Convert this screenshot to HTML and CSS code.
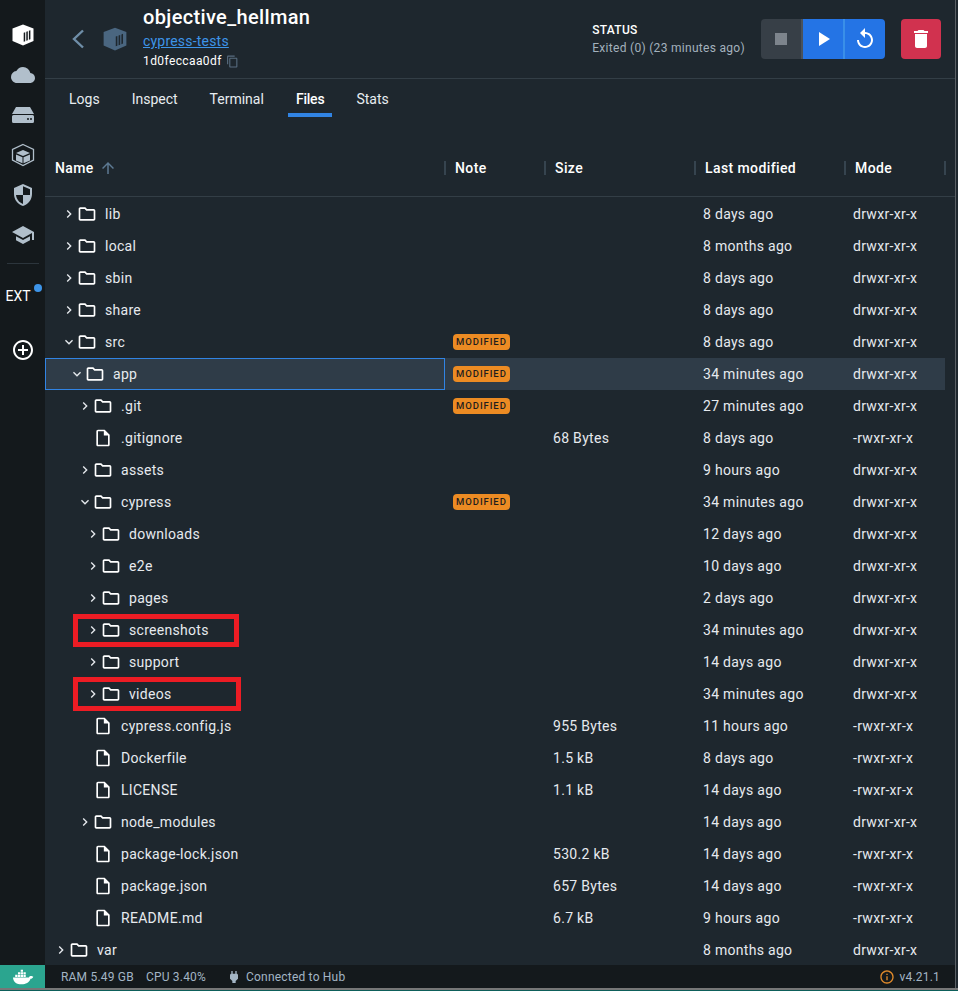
FILE: index.html
```html
<!DOCTYPE html>
<html lang="en">
<head>
    <meta charset="UTF-8">
    <meta name="viewport" content="width=device-width, initial-scale=1.0">
    <title>objective_hellman</title>
    <link rel="stylesheet" href="styles.css">
</head>
<body>

    <svg class="defs" width="0" height="0">
        <symbol id="folder" viewBox="0 0 24 24"><path d="M9.17 6l2 2H20v10H4V6h5.17M10 4H4c-1.1 0-1.99.9-1.99 2L2 18c0 1.1.9 2 2 2h16c1.1 0 2-.9 2-2V8c0-1.1-.9-2-2-2h-8l-2-2z"/></symbol>
        <symbol id="file" viewBox="0 0 24 24"><path d="M14 2H6c-1.1 0-1.99.9-1.99 2L4 20c0 1.1.89 2 1.99 2H18c1.1 0 2-.9 2-2V8l-6-6zM6 20V4h7v5h5v11H6z"/></symbol>
        <symbol id="right" viewBox="0 0 24 24"><path d="M10 6L8.59 7.41 13.17 12l-4.58 4.59L10 18l6-6z"/></symbol>
        <symbol id="down" viewBox="0 0 24 24"><path d="M16.59 8.59L12 13.17 7.41 8.59 6 10l6 6 6-6z"/></symbol>
        <symbol id="box" viewBox="0 0 24 24"><path fill-rule="evenodd" d="M12 1.5l10.5 4v12.6L12 22.5 1.5 18.100V5.500zM12.700 9.800v9l1.500-.6v-9zM15.300 8.800v9l1.500-.6v-9zM17.900 7.800v9l1.500-.6v-9z"/></symbol>
    </svg>

    <div class="window">
        <div class="app">
            <!-- Left nav -->
            <nav class="sidebar">
                <svg class="nav-icon first" viewBox="0 0 24 24"><use href="#box" fill="#fff"/></svg>
                <svg class="nav-icon" viewBox="0 0 24 24"><path d="M19.350 10.040A7.490 7.490 0 0 0 12 4C9.110 4 6.600 5.640 5.350 8.040A5.994 5.994 0 0 0 0 14c0 3.310 2.690 6 6 6h13c2.760 0 5-2.240 5-5 0-2.640-2.050-4.780-4.650-4.960z"/></svg>
                <svg class="nav-icon" viewBox="0 0 24 24"><path fill-rule="evenodd" d="M5 4h14l4 7H1zM2.500 12h19A1.500 1.500 0 0 1 23 13.500v5a1.500 1.500 0 0 1-1.500 1.500h-19A1.500 1.500 0 0 1 1 18.500v-5A1.500 1.500 0 0 1 2.500 12zM17 15a1 1 0 1 0 0 2 1 1 0 0 0 0-2zM20 15a1 1 0 1 0 0 2 1 1 0 0 0 0-2z"/></svg>
                <svg class="nav-icon" viewBox="0 0 24 24"><path d="M12 7l7 3-7 3-7-3zM5 11.500l6.500 2.800v6L5 17.500zM19 11.500l-6.500 2.800v6l6.500-2.800z"/><path d="M12 1.500l10.500 5v10.500L12 22.500 1.500 17V6.500z" fill="none" stroke="currentColor" stroke-width="1.300"/></svg>
                <svg class="nav-icon" viewBox="0 0 24 24"><path fill-rule="evenodd" d="M12 1l9 4v6c0 5.550-3.840 10.740-9 12-5.160-1.260-9-6.450-9-12V5zM12 3.200V12H5c.46 4.100 3.300 7.800 7 8.900V12h7V6.300z"/></svg>
                <svg class="nav-icon" viewBox="0 0 24 24"><path d="M12 3L1 9l11 6 9-4.910V17h2V9zM5 13.180v4L12 21l7-3.820v-4L12 17z"/></svg>
                <div class="nav-sep"></div>
                <div class="ext">EXT<span class="ext-dot"></span></div>
                <svg class="nav-add" viewBox="0 0 24 24"><path fill="#fff" d="M13 7h-2v4H7v2h4v4h2v-4h4v-2h-4V7zm-1-5C6.480 2 2 6.480 2 12s4.480 10 10 10 10-4.480 10-10S17.520 2 12 2zm0 18c-4.410 0-8-3.590-8-8s3.590-8 8-8 8 3.590 8 8-3.590 8-8 8z"/></svg>
            </nav>

            <main class="main">
                <!-- Container header -->
                <header class="header">
                    <svg class="back" viewBox="0 0 24 24"><path d="M17 3.500L8 12l9 8.500" fill="none" stroke="currentColor" stroke-width="2.400"/></svg>
                    <svg class="head-box" viewBox="0 0 24 24"><use href="#box"/></svg>
                    <div class="title">
                        <h1>objective_hellman</h1>
                        <a href="#">cypress-tests</a>
                        <div class="cid">1d0feccaa0df
                            <svg viewBox="0 0 24 24"><path d="M16 1H4c-1.100 0-2 .9-2 2v14h2V3h12V1zm3 4H8c-1.100 0-2 .9-2 2v14c0 1.100.9 2 2 2h11c1.100 0 2-.9 2-2V7c0-1.100-.9-2-2-2zm0 16H8V7h11v14z"/></svg>
                        </div>
                    </div>
                    <div class="status">
                        <b>STATUS</b>
                        <span>Exited (0) (23 minutes ago)</span>
                    </div>
                    <div class="btn-group">
                        <button class="btn btn-stop"><svg viewBox="0 0 24 24"><path d="M6 6h12v12H6z"/></svg></button>
                        <button class="btn btn-blue"><svg viewBox="0 0 24 24"><path d="M8 5v14l11-7z"/></svg></button>
                        <button class="btn btn-blue"><svg viewBox="0 0 24 24"><path d="M12 5V1L7 6l5 5V7c3.310 0 6 2.690 6 6s-2.690 6-6 6-6-2.690-6-6H4c0 4.420 3.580 8 8 8s8-3.580 8-8-3.580-8-8-8z"/></svg></button>
                    </div>
                    <button class="btn btn-delete"><svg viewBox="0 0 24 24"><path d="M6 19c0 1.100.9 2 2 2h8c1.100 0 2-.9 2-2V7H6v12zM19 4h-3.500l-1-1h-5l-1 1H5v2h14V4z"/></svg></button>
                </header>

                <div class="tabs">
                    <span class="tab">Logs</span>
                    <span class="tab">Inspect</span>
                    <span class="tab">Terminal</span>
                    <span class="tab active">Files</span>
                    <span class="tab">Stats</span>
                </div>

                <!-- File table -->
                <div class="thead">
                    <div class="th">Name <svg viewBox="0 0 24 24"><path d="M4 12l1.410 1.410L11 7.830V20h2V7.830l5.580 5.590L20 12l-8-8-8 8z"/></svg></div>
                    <div class="th">Note</div>
                    <div class="th">Size</div>
                    <div class="th">Last modified</div>
                    <div class="th">Mode</div>
                </div>

                <div class="rows">
                    <div class="row"><div class="name d1"><svg class="chev"><use href="#right"/></svg><svg class="ico"><use href="#folder"/></svg>lib</div><div></div><div></div><div>8 days ago</div><div>drwxr-xr-x</div></div>
                    <div class="row"><div class="name d1"><svg class="chev"><use href="#right"/></svg><svg class="ico"><use href="#folder"/></svg>local</div><div></div><div></div><div>8 months ago</div><div>drwxr-xr-x</div></div>
                    <div class="row"><div class="name d1"><svg class="chev"><use href="#right"/></svg><svg class="ico"><use href="#folder"/></svg>sbin</div><div></div><div></div><div>8 days ago</div><div>drwxr-xr-x</div></div>
                    <div class="row"><div class="name d1"><svg class="chev"><use href="#right"/></svg><svg class="ico"><use href="#folder"/></svg>share</div><div></div><div></div><div>8 days ago</div><div>drwxr-xr-x</div></div>
                    <div class="row"><div class="name d1"><svg class="chev"><use href="#down"/></svg><svg class="ico"><use href="#folder"/></svg>src</div><div><span class="badge">MODIFIED</span></div><div></div><div>8 days ago</div><div>drwxr-xr-x</div></div>
                    <div class="row selected"><div class="name d2"><svg class="chev"><use href="#down"/></svg><svg class="ico"><use href="#folder"/></svg>app</div><div><span class="badge">MODIFIED</span></div><div></div><div>34 minutes ago</div><div>drwxr-xr-x</div></div>
                    <div class="row"><div class="name d3"><svg class="chev"><use href="#right"/></svg><svg class="ico"><use href="#folder"/></svg>.git</div><div><span class="badge">MODIFIED</span></div><div></div><div>27 minutes ago</div><div>drwxr-xr-x</div></div>
                    <div class="row"><div class="name d3 leaf"><svg class="ico"><use href="#file"/></svg>.gitignore</div><div></div><div>68 Bytes</div><div>8 days ago</div><div>-rwxr-xr-x</div></div>
                    <div class="row"><div class="name d3"><svg class="chev"><use href="#right"/></svg><svg class="ico"><use href="#folder"/></svg>assets</div><div></div><div></div><div>9 hours ago</div><div>drwxr-xr-x</div></div>
                    <div class="row"><div class="name d3"><svg class="chev"><use href="#down"/></svg><svg class="ico"><use href="#folder"/></svg>cypress</div><div><span class="badge">MODIFIED</span></div><div></div><div>34 minutes ago</div><div>drwxr-xr-x</div></div>
                    <div class="row"><div class="name d4"><svg class="chev"><use href="#right"/></svg><svg class="ico"><use href="#folder"/></svg>downloads</div><div></div><div></div><div>12 days ago</div><div>drwxr-xr-x</div></div>
                    <div class="row"><div class="name d4"><svg class="chev"><use href="#right"/></svg><svg class="ico"><use href="#folder"/></svg>e2e</div><div></div><div></div><div>10 days ago</div><div>drwxr-xr-x</div></div>
                    <div class="row"><div class="name d4"><svg class="chev"><use href="#right"/></svg><svg class="ico"><use href="#folder"/></svg>pages</div><div></div><div></div><div>2 days ago</div><div>drwxr-xr-x</div></div>
                    <div class="row"><div class="name d4"><svg class="chev"><use href="#right"/></svg><svg class="ico"><use href="#folder"/></svg>screenshots<span class="mark mark-shots"></span></div><div></div><div></div><div>34 minutes ago</div><div>drwxr-xr-x</div></div>
                    <div class="row"><div class="name d4"><svg class="chev"><use href="#right"/></svg><svg class="ico"><use href="#folder"/></svg>support</div><div></div><div></div><div>14 days ago</div><div>drwxr-xr-x</div></div>
                    <div class="row"><div class="name d4"><svg class="chev"><use href="#right"/></svg><svg class="ico"><use href="#folder"/></svg>videos<span class="mark mark-videos"></span></div><div></div><div></div><div>34 minutes ago</div><div>drwxr-xr-x</div></div>
                    <div class="row"><div class="name d3 leaf"><svg class="ico"><use href="#file"/></svg>cypress.config.js</div><div></div><div>955 Bytes</div><div>11 hours ago</div><div>-rwxr-xr-x</div></div>
                    <div class="row"><div class="name d3 leaf"><svg class="ico"><use href="#file"/></svg>Dockerfile</div><div></div><div>1.5 kB</div><div>8 days ago</div><div>-rwxr-xr-x</div></div>
                    <div class="row"><div class="name d3 leaf"><svg class="ico"><use href="#file"/></svg>LICENSE</div><div></div><div>1.1 kB</div><div>14 days ago</div><div>-rwxr-xr-x</div></div>
                    <div class="row"><div class="name d3"><svg class="chev"><use href="#right"/></svg><svg class="ico"><use href="#folder"/></svg>node_modules</div><div></div><div></div><div>14 days ago</div><div>drwxr-xr-x</div></div>
                    <div class="row"><div class="name d3 leaf"><svg class="ico"><use href="#file"/></svg>package-lock.json</div><div></div><div>530.2 kB</div><div>14 days ago</div><div>-rwxr-xr-x</div></div>
                    <div class="row"><div class="name d3 leaf"><svg class="ico"><use href="#file"/></svg>package.json</div><div></div><div>657 Bytes</div><div>14 days ago</div><div>-rwxr-xr-x</div></div>
                    <div class="row"><div class="name d3 leaf"><svg class="ico"><use href="#file"/></svg>README.md</div><div></div><div>6.7 kB</div><div>9 hours ago</div><div>-rwxr-xr-x</div></div>
                    <div class="row"><div class="name d0"><svg class="chev"><use href="#right"/></svg><svg class="ico"><use href="#folder"/></svg>var</div><div></div><div></div><div>8 months ago</div><div>drwxr-xr-x</div></div>
                </div>
            </main>
        </div>

        <!-- Status bar -->
        <footer class="statusbar">
            <div class="whale">
                <svg viewBox="0 0 24 24"><path d="M1 12.500h17.500c.6-1.600 2.200-2 3.500-1.400l1.200.6c-.6 1.500-1.700 2.200-3 2.300C18.800 18.500 15 20 10.500 20 5 20 1.500 17.500 1 12.500zM3.500 9.500h2.500V12H3.500zM6.500 9.500H9V12H6.500zM9.500 9.500H12V12H9.500zM12.500 9.500H15V12h-2.500zM6.500 6.700H9v2.300H6.500zM9.500 6.700H12v2.300H9.500zM12.500 6.700H15v2.300h-2.500zM9.500 4H12v2.300H9.500z"/></svg>
            </div>
            <span class="stat">RAM 5.49 GB</span>
            <span class="stat">CPU 3.40%</span>
            <svg class="plug" viewBox="0 0 24 24"><path d="M16 7V3h-2v4h-4V3H8v4h-.01C7 6.990 6 7.990 6 8.990v5.490L9.500 18v3h5v-3l3.500-3.510v-5.500c0-1-1-2-2-1.990z"/></svg>
            <span class="stat">Connected to Hub</span>
            <span class="version">
                <svg viewBox="0 0 24 24"><path d="M11 7h2v2h-2zm0 4h2v6h-2zm1-9C6.480 2 2 6.480 2 12s4.480 10 10 10 10-4.480 10-10S17.520 2 12 2zm0 18c-4.410 0-8-3.590-8-8s3.590-8 8-8 8 3.590 8 8-3.590 8-8 8z"/></svg>
                v4.21.1
            </span>
        </footer>
    </div>
    <div class="window-edge"></div>

</body>
</html>
```

FILE: styles.css
```css
* {
    box-sizing: border-box;
}
html, body {
    height: 100%;
}
body {
    margin: 0;
    height: 991px;
    overflow: hidden;
    display: flex;
    flex-direction: column;
    font-family: Roboto, "Liberation Sans", sans-serif;
    font-size: 14px;
    letter-spacing: 0.3px;
    background-color: #1e272e;
    color: #fff;
}
.defs {
    position: absolute;
}
svg {
    fill: currentColor;
    flex: none;
}

.window {
    flex: 1;
    min-height: 0;
    width: 956px;
    border-right: 1px solid #5a6065;
    display: flex;
    flex-direction: column;
}
.app {
    flex: 1;
    display: flex;
    min-height: 0;
}

/* sidebar */
.sidebar {
    width: 45px;
    flex: none;
    background-color: #14191c;
    display: flex;
    flex-direction: column;
    align-items: center;
    color: #b1bfcb;
}
.nav-icon {
    width: 24px;
    height: 24px;
    margin-bottom: 16px;
}
.nav-icon.first {
    margin-top: 23px;
}
.nav-sep {
    width: 32px;
    height: 1px;
    background-color: #2c353c;
}
.ext {
    position: relative;
    margin-top: 24px;
    margin-right: 9px;
    color: #fff;
    letter-spacing: 0;
    line-height: 16px;
}
.ext-dot {
    position: absolute;
    top: -4px;
    right: -11px;
    width: 8px;
    height: 8px;
    border-radius: 50%;
    background-color: #3d94e8;
}
.nav-add {
    width: 24px;
    height: 24px;
    margin-top: 34px;
}

/* main */
.main {
    flex: 1;
    min-width: 0;
    min-height: 0;
    overflow: hidden;
    display: flex;
    flex-direction: column;
}
.header {
    height: 79px;
    flex: none;
    display: flex;
    align-items: center;
    border-bottom: 1px solid #333e46;
    padding-right: 14px;
}
.back {
    width: 24px;
    height: 24px;
    margin-left: 21px;
    color: #6f8ea8;
}
.head-box {
    width: 26px;
    height: 26px;
    margin-left: 12px;
    color: #4a6680;
}
.title {
    margin-left: 15px;
    align-self: flex-start;
    padding-top: 4px;
    flex: 1;
}
.title h1 {
    margin: 0;
    font-size: 20px;
    font-weight: 500;
    line-height: 27px;
    letter-spacing: 0.35px;
}
.title a {
    display: block;
    color: #3d94e8;
    line-height: 20px;
    letter-spacing: 0.2px;
}
.cid {
    display: flex;
    align-items: center;
    gap: 4px;
    font-size: 12px;
    line-height: 20px;
    letter-spacing: 0.4px;
}
.cid svg {
    width: 13px;
    height: 13px;
    color: #586d80;
}
.status {
    display: flex;
    flex-direction: column;
    font-size: 12px;
    line-height: 18px;
    margin-right: 16px;
}
.status b {
    font-weight: 500;
}
.status span {
    color: #a3b1bd;
}
.btn-group {
    display: flex;
    border-radius: 4px;
    overflow: hidden;
}
.btn {
    width: 40px;
    height: 40px;
    padding: 0;
    border: none;
    color: #fff;
    display: flex;
    align-items: center;
    justify-content: center;
}
.btn svg {
    width: 24px;
    height: 24px;
}
.btn-stop {
    background-color: #373f47;
    border-right: 2px solid #4a525a;
    width: 42px;
    color: #7d848c;
}
.btn-blue {
    background-color: #2474e5;
}
.btn-blue + .btn-blue {
    border-left: 2px solid #3a8fe8;
    width: 42px;
}
.btn-delete {
    margin-left: 16px;
    border-radius: 4px;
    background-color: #d1324f;
}

/* tabs */
.tabs {
    height: 39px;
    flex: none;
    display: flex;
    padding-left: 8px;
}
.tab {
    margin: 0 8px;
    padding: 0 8px;
    line-height: 40px;
    height: 38px;
    letter-spacing: 0;
    color: #e8edf1;
}
.tab.active {
    font-weight: 500;
    letter-spacing: -0.2px;
    color: #fff;
    border-bottom: 4px solid #3184e4;
}

/* table */
.thead, .row {
    display: grid;
    grid-template-columns: 400px 100px 150px 150px 100px;
    width: 900px;
}
.thead {
    flex: none;
    margin-top: 25px;
    height: 54px;
    padding-top: 18px;
    align-items: start;
    border-bottom: 1px solid #333e46;
    width: 911px;
}
.th {
    font-weight: 500;
    padding-left: 10px;
    margin-right: -1px;
    border-right: 2px solid #36444f;
    height: 14px;
    line-height: 14px;
    display: flex;
    align-items: center;
    gap: 5px;
    letter-spacing: 0.4px;
}
.th svg {
    width: 18px;
    height: 18px;
    color: #5d7a93;
}
.rows {
    flex: none;
    padding-top: 1px;
}
.row {
    height: 32px;
    align-items: center;
    color: #e6eaee;
}
.row > div {
    padding-left: 8px;
}
.row > .name {
    position: relative;
    display: flex;
    align-items: center;
    height: 32px;
    padding-left: 8px;
}
.name .ico {
    width: 20px;
    height: 20px;
    margin-right: 8px;
    color: #fff;
}
.name .chev {
    width: 16px;
    height: 16px;
    color: #e6eaee;
}
.row > .d1 { padding-left: 16px; }
.row > .d2 { padding-left: 24px; }
.row > .d3 { padding-left: 32px; }
.row > .d4 { padding-left: 40px; }
.row > .leaf { padding-left: 48px; }
.selected {
    background-color: #2f3c48;
}
.row.selected > .name {
    border: 1px solid #3184e4;
    padding-left: 23px;
}
.badge {
    display: block;
    width: fit-content;
    padding: 0 3px;
    background-color: #ec8b23;
    border-radius: 4px;
    color: #1e1e1e;
    font-size: 9.500px;
    font-weight: 500;
    line-height: 16px;
    height: 16px;
    letter-spacing: 0.95px;
}

/* red annotation boxes drawn over the screenshot */
.mark {
    position: absolute;
    left: 28px;
    border: 5px solid #ed1c24;
}
.mark-shots {
    top: 0;
    height: 33px;
    width: 166px;
}
.mark-videos {
    top: -1px;
    height: 34px;
    width: 168px;
}

/* status bar */
.statusbar {
    height: 23px;
    flex: none;
    display: flex;
    align-items: center;
    background-color: #14191c;
    color: #a3b5c5;
    font-size: 12px;
    letter-spacing: 0.2px;
    padding-right: 15px;
}
.whale {
    width: 45px;
    height: 23px;
    background-color: #2ba58f;
    display: flex;
    align-items: center;
    justify-content: center;
    margin-right: 16px;
    color: #fff;
}
.whale svg {
    width: 22px;
    height: 22px;
}
.stat {
    margin-right: 12px;
}
.plug {
    width: 16px;
    height: 16px;
    margin: 0 4px 0 8px;
}
.version {
    margin-left: auto;
    display: flex;
    align-items: center;
    gap: 4px;
}
.version svg {
    width: 16px;
    height: 16px;
    color: #e08a2b;
}
.window-edge {
    height: 3px;
    flex: none;
    background: linear-gradient(#777 2px, #0d5f5a 2px);
}
```
